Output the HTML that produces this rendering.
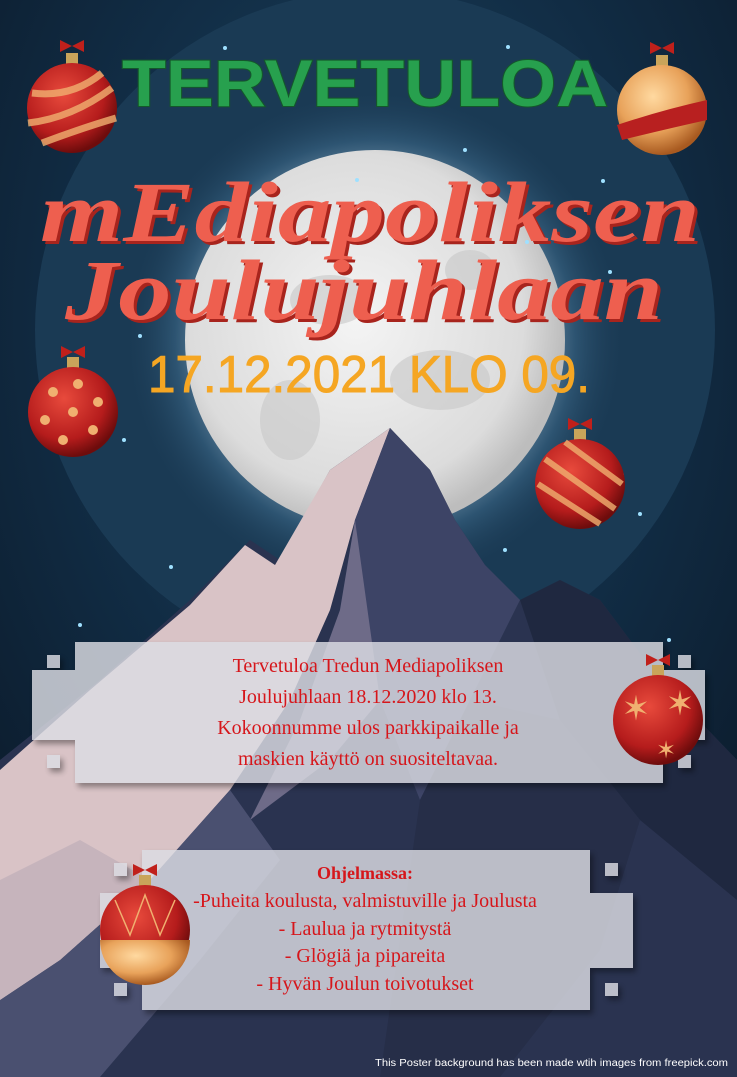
<!DOCTYPE html>
<html><head><meta charset="utf-8"><style>
html,body{margin:0;padding:0;width:737px;height:1077px;overflow:hidden;background:#0c1a2a}
svg{display:block}
</style></head><body>
<svg width="737" height="1077" viewBox="0 0 737 1077" xmlns="http://www.w3.org/2000/svg">
<defs>
<radialGradient id="bg" cx="0.5" cy="0.3" r="0.8"><stop offset="0" stop-color="#1c4460"/><stop offset="0.5" stop-color="#112c44"/><stop offset="1" stop-color="#0a1624"/></radialGradient>
<radialGradient id="halo" cx="0.5" cy="0.5" r="0.5"><stop offset="0.7" stop-color="#6f93ad"/><stop offset="0.8" stop-color="#355f7e"/><stop offset="1" stop-color="#1d3d57" stop-opacity="0"/></radialGradient>
<radialGradient id="moon" cx="0.45" cy="0.45" r="0.55"><stop offset="0" stop-color="#f4f4f4"/><stop offset="0.8" stop-color="#dcdcdc"/><stop offset="1" stop-color="#bdbdbd"/></radialGradient>
<radialGradient id="red" cx="0.4" cy="0.35" r="0.65"><stop offset="0" stop-color="#e84a3c"/><stop offset="0.7" stop-color="#b51c1c"/><stop offset="1" stop-color="#6e0c0c"/></radialGradient>
<radialGradient id="gold" cx="0.4" cy="0.35" r="0.65"><stop offset="0" stop-color="#ffd9a0"/><stop offset="0.6" stop-color="#e8a25a"/><stop offset="1" stop-color="#a85a20"/></radialGradient>
<filter id="sh"><feDropShadow dx="3" dy="4" stdDeviation="3" flood-color="#000" flood-opacity="0.45"/></filter>
</defs>
<rect width="737" height="1077" fill="url(#bg)"/>
<circle cx="375" cy="330" r="340" fill="#1a3a54"/>
<circle cx="375" cy="340" r="250" fill="url(#halo)" opacity="0.7"/>
<circle cx="375" cy="340" r="190" fill="url(#moon)"/>
<g fill="#c8c8c8" opacity="0.6">
<ellipse cx="330" cy="300" rx="40" ry="25"/><ellipse cx="440" cy="380" rx="50" ry="30"/><ellipse cx="290" cy="420" rx="30" ry="40"/><ellipse cx="470" cy="270" rx="25" ry="20"/>
</g>
<!-- mountains -->
<polygon points="0,1077 0,760 100,680 190,600 250,540 280,560 330,470 390,428 430,470 455,520 485,565 520,600 560,580 600,600 660,680 737,760 737,1077" fill="#2a3350"/>
<polygon points="0,770 90,690 190,605 245,545 275,565 330,470 390,428 355,520 330,610 290,700 230,790 150,880 60,960 0,1000" fill="#d9c3c6"/>
<polygon points="390,428 430,470 455,520 485,565 520,600 470,700 420,800 380,700 340,610 355,520" fill="#3d4466"/>
<polygon points="355,520 340,610 300,720 250,820 330,760 380,700" fill="#6e6b88"/>
<polygon points="520,600 560,580 600,600 660,680 737,760 737,900 640,820 560,720" fill="#1f2840"/>
<polygon points="0,1000 60,960 150,880 230,790 280,860 200,960 100,1077 0,1077" fill="#4a5070"/>
<polygon points="0,880 80,840 150,880 60,960 0,1000" fill="#c6b4bc"/>
<polygon points="420,800 470,700 560,720 640,820 600,950 500,1077 380,1077" fill="#262e48"/>
<!-- stars -->
<g fill="#9fe0ff">
<circle cx="225" cy="48" r="2"/><circle cx="508" cy="47" r="2"/><circle cx="106" cy="98" r="2"/><circle cx="465" cy="150" r="2"/><circle cx="357" cy="180" r="2"/><circle cx="603" cy="181" r="2"/><circle cx="527" cy="242" r="2"/><circle cx="610" cy="272" r="2"/><circle cx="140" cy="336" r="2"/><circle cx="124" cy="440" r="2"/><circle cx="622" cy="475" r="2"/><circle cx="640" cy="514" r="2"/><circle cx="505" cy="550" r="2"/><circle cx="171" cy="567" r="2"/><circle cx="80" cy="625" r="2"/><circle cx="669" cy="640" r="2"/>
</g>
<!-- boxes -->
<g filter="url(#sh)" fill="#dcdde4" opacity="0.82">
<path d="M75,642 H663 V670 H705 V740 H663 V783 H75 V740 H32 V670 H75 Z"/>
<rect x="47" y="655" width="13" height="13"/><rect x="47" y="755" width="13" height="13"/><rect x="678" y="655" width="13" height="13"/><rect x="678" y="755" width="13" height="13"/>
<path d="M142,850 H590 V893 H633 V968 H590 V1010 H142 V968 H100 V893 H142 Z"/>
<rect x="114" y="863" width="13" height="13"/><rect x="114" y="983" width="13" height="13"/><rect x="605" y="863" width="13" height="13"/><rect x="605" y="983" width="13" height="13"/>
</g>
<g font-family="Liberation Serif, serif" font-size="20" fill="#d6161b" text-anchor="middle">
<text x="368" y="672">Tervetuloa Tredun Mediapoliksen</text>
<text x="368" y="703">Joulujuhlaan 18.12.2020 klo 13.</text>
<text x="368" y="734">Kokoonnumme ulos parkkipaikalle ja</text>
<text x="368" y="765">maskien käyttö on suositeltavaa.</text>
<text x="365" y="879" font-weight="bold" font-size="18">Ohjelmassa:</text>
<text x="365" y="907">-Puheita koulusta, valmistuville ja Joulusta</text>
<text x="365" y="935">- Laulua ja rytmitystä</text>
<text x="365" y="962">- Glögiä ja pipareita</text>
<text x="365" y="990">- Hyvän Joulun toivotukset</text>
</g>
<text x="728" y="1066" text-anchor="end" font-family="Liberation Sans, sans-serif" font-size="10" fill="#fff" textLength="353" lengthAdjust="spacingAndGlyphs">This Poster background has been made wtih images from freepick.com</text>
<!-- titles -->
<text x="122" y="106" font-family="Liberation Sans, sans-serif" font-weight="bold" font-size="66" fill="#27a04e" stroke="#14582a" stroke-width="2" paint-order="stroke" textLength="486" lengthAdjust="spacingAndGlyphs">TERVETULOA</text>
<g font-family="Liberation Serif, serif" font-style="italic" font-weight="bold" font-size="86">
<text x="43" y="244" fill="#a8241d" textLength="660" lengthAdjust="spacingAndGlyphs">mEdiapoliksen</text>
<text x="40" y="241" fill="#ee5f4f" textLength="660" lengthAdjust="spacingAndGlyphs">mEdiapoliksen</text>
<text x="68" y="322" fill="#a8241d" textLength="598" lengthAdjust="spacingAndGlyphs">Joulujuhlaan</text>
<text x="65" y="319" fill="#ee5f4f" textLength="598" lengthAdjust="spacingAndGlyphs">Joulujuhlaan</text>
</g>
<text x="148" y="392" font-family="Liberation Sans, sans-serif" font-size="52" fill="#f5a623" stroke="#f5a623" stroke-width="1" textLength="442" lengthAdjust="spacingAndGlyphs">17.12.2021 KLO 09.</text>
<!-- ornaments -->
<g>
<g transform="translate(72,108)"><rect x="-6" y="-55" width="12" height="12" fill="#c9a45a"/><path d="M-12,-68 L0,-62 L12,-68 L12,-56 L0,-62 L-12,-56Z" fill="#c0201b"/><circle r="45" fill="url(#red)"/><path d="M-40,-15 Q0,-10 30,-35 M-44,15 Q0,10 40,-20 M-30,35 Q10,20 44,10" stroke="#f0b070" stroke-width="7" fill="none" opacity="0.8"/></g>
<g transform="translate(662,110)"><rect x="-6" y="-55" width="12" height="12" fill="#c9a45a"/><path d="M-12,-68 L0,-62 L12,-68 L12,-56 L0,-62 L-12,-56Z" fill="#c0201b"/><circle r="45" fill="url(#gold)"/><path d="M-45,15 Q0,0 45,-10 L45,10 Q0,20 -40,30Z" fill="#b82020"/></g>
<g transform="translate(73,412)"><rect x="-6" y="-55" width="12" height="12" fill="#c9a45a"/><path d="M-12,-66 L0,-60 L12,-66 L12,-54 L0,-60 L-12,-54Z" fill="#c0201b"/><circle r="45" fill="url(#red)"/><g fill="#f0b070"><circle cx="-20" cy="-20" r="5"/><circle cx="5" cy="-28" r="5"/><circle cx="25" cy="-10" r="5"/><circle cx="-28" cy="8" r="5"/><circle cx="0" cy="0" r="5"/><circle cx="20" cy="18" r="5"/><circle cx="-10" cy="28" r="5"/></g></g>
<g transform="translate(580,484)"><rect x="-6" y="-55" width="12" height="12" fill="#c9a45a"/><path d="M-12,-66 L0,-60 L12,-66 L12,-54 L0,-60 L-12,-54Z" fill="#c0201b"/><circle r="45" fill="url(#red)"/><path d="M-35,-25 L35,25 M-42,0 L20,40 M-15,-42 L42,0" stroke="#f0b070" stroke-width="6" opacity="0.8"/></g>
<g transform="translate(658,720)"><rect x="-6" y="-55" width="12" height="12" fill="#c9a45a"/><path d="M-12,-66 L0,-60 L12,-66 L12,-54 L0,-60 L-12,-54Z" fill="#c0201b"/><circle r="45" fill="url(#red)"/><g fill="#f0b070" font-size="34" font-family="DejaVu Sans" text-anchor="middle"><text x="-22" y="0">✶</text><text x="22" y="-5">✶</text><text x="8" y="38" font-size="24">✶</text></g></g>
<g transform="translate(145,930)"><rect x="-6" y="-55" width="12" height="12" fill="#c9a45a"/><path d="M-12,-66 L0,-60 L12,-66 L12,-54 L0,-60 L-12,-54Z" fill="#c0201b"/><circle r="45" fill="url(#red)"/><path d="M-45,10 H45 A45,45 0 0 1 -45,10Z" fill="url(#gold)"/><path d="M-30,-30 L-15,5 L0,-35 L15,5 L30,-30" stroke="#f0b070" stroke-width="1.5" fill="none"/></g>
</g>
</svg>
</body></html>
